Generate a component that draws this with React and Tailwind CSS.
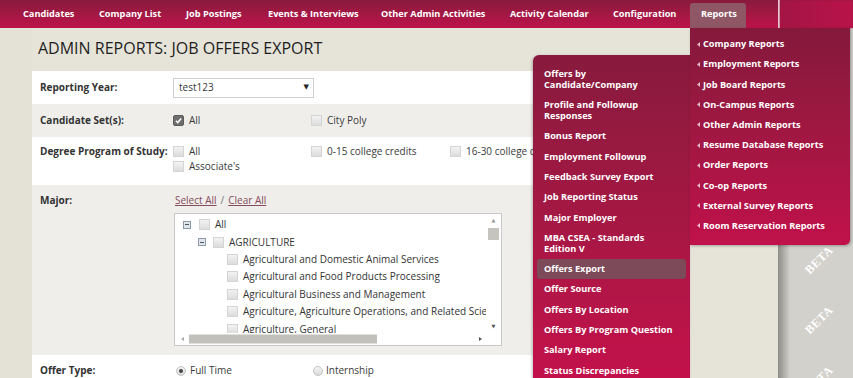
import React from 'react';

const navItems = [
    ['Candidates', 'w-[76px]'],
    ['Company List', 'w-[87px]'],
    ['Job Postings', 'w-[82px]'],
    ['Events & Interviews', 'w-[113px]'],
    ['Other Admin Activities', 'w-[129px]'],
    ['Activity Calendar', 'w-[103px]'],
    ['Configuration', 'w-[88px]'],
];

const subItems = [
    ['Offers by', 'Candidate/Company'],
    ['Profile and Followup', 'Responses'],
    ['Bonus Report'],
    ['Employment Followup'],
    ['Feedback Survey Export'],
    ['Job Reporting Status'],
    ['Major Employer'],
    ['MBA CSEA - Standards', 'Edition V'],
    ['Offers Export'],
    ['Offer Source'],
    ['Offers By Location'],
    ['Offers By Program Question'],
    ['Salary Report'],
    ['Status Discrepancies'],
];

const reportGroups = [
    'Company Reports',
    'Employment Reports',
    'Job Board Reports',
    'On-Campus Reports',
    'Other Admin Reports',
    'Resume Database Reports',
    'Order Reports',
    'Co-op Reports',
    'External Survey Reports',
    'Room Reservation Reports',
];

const majors = [
    'Agricultural and Domestic Animal Services',
    'Agricultural and Food Products Processing',
    'Agricultural Business and Management',
    'Agriculture, Agriculture Operations, and Related Sciences',
    'Agriculture, General',
];

function Box({ checked, className = '' }) {
    if (checked) {
        return (
            <span className={`w-[11px] h-[11px] shrink-0 rounded-[2px] bg-[#6e6e6e] border border-[#5c5c5c] flex items-center justify-center ${className}`}>
                <svg width="7" height="7" viewBox="0 0 8 8">
                    <path d="M1 4.3 L3.1 6.3 L7 1.6" stroke="white" strokeWidth="1.8" fill="none" />
                </svg>
            </span>
        );
    }
    return <span className={`block w-[11px] h-[11px] shrink-0 border border-[#d4d4d4] bg-linear-to-b from-[#f3f3f3] to-[#dcdcdc] ${className}`} />;
}

function Radio({ checked }) {
    return (
        <span className="w-[10px] h-[10px] shrink-0 rounded-full border border-[#c4c4c4] bg-linear-to-b from-[#f4f4f4] to-[#dadada] flex items-center justify-center">
            {checked && <span className="w-[4px] h-[4px] rounded-full bg-[#444]" />}
        </span>
    );
}

function Toggle() {
    return (
        <span className="w-[8px] h-[8px] shrink-0 border border-[#8f9aa8] bg-[#dfe5ec] flex items-center justify-center">
            <span className="w-[4px] h-[1px] bg-[#4b5664]" />
        </span>
    );
}

function Row({ label, className, children }) {
    return (
        <div className={`flex shrink-0 ${className}`}>
            <div className="w-[141px] shrink-0 pl-[8px] font-bold text-[#333]">{label}</div>
            <div className="flex-1">{children}</div>
        </div>
    );
}

export default function App() {
    return (
        <div className="relative w-[853px] h-[378px] overflow-hidden bg-[#e6e3d9] font-['Open_Sans','DejaVu_Sans',sans-serif] text-[10px] text-[#3a3a3a]">
            {/* top nav */}
            <div className="flex h-[28px] bg-linear-to-b from-[#891a3d] to-[#bd124a] pl-[11px] text-white font-bold text-[9.2px]">
                {navItems.map(([label, w]) => (
                    <div key={label} className={`${w} pl-[12px] flex items-center pb-[1px]`}>
                        {label}
                    </div>
                ))}
                <div className="ml-[1px] mt-[3px] w-[56px] pl-[11px] flex items-center pb-[3px] rounded-t-[3px] bg-[#8f5766]">
                    Reports
                </div>
                <div className="ml-[32px] w-[2px] bg-[#e9d6dd]" />
                <div className="flex-1 bg-linear-to-r from-[#a31545] to-[#b9134a] blur-[1px]" />
            </div>

            <div className="flex h-[350px]">
                <div className="w-[778px] flex">
                    <div className="w-[32px] bg-[#e4e1d6]" />
                    <div className="flex-1 flex flex-col">
                        <div className="h-[43px] shrink-0 pl-[6px] pb-[4px] flex items-center text-[16px] text-[#1e1e1e]">
                            ADMIN REPORTS: JOB OFFERS EXPORT
                        </div>

                        <div className="w-[640px] shrink-0 flex flex-col">
                            <Row label="Reporting Year:" className="h-[33px] items-center bg-white">
                                <div className="w-[141px] h-[20px] border border-[#cfcfcf] bg-white flex items-center justify-between pl-[5px] pr-[4px]">
                                    <span>test123</span>
                                    <span className="text-[7px] text-[#222]">▼</span>
                                </div>
                            </Row>

                            <Row label="Candidate Set(s):" className="h-[33px] items-center bg-[#efeeeb]">
                                <div className="flex">
                                    <label className="w-[138px] flex items-center gap-[5px]">
                                        <Box checked /> All
                                    </label>
                                    <label className="flex items-center gap-[5px]">
                                        <Box /> City Poly
                                    </label>
                                </div>
                            </Row>

                            <Row label="Degree Program of Study:" className="h-[48px] pt-[7px] bg-white leading-[15px]">
                                <div className="grid grid-cols-[138px_139px_1fr]">
                                    <label className="flex items-center gap-[5px]"><Box /> All</label>
                                    <label className="flex items-center gap-[5px]"><Box /> 0-15 college credits</label>
                                    <label className="flex items-center gap-[5px] whitespace-nowrap"><Box /> 16-30 college credits</label>
                                    <label className="flex items-center gap-[5px]"><Box /> Associate's</label>
                                </div>
                            </Row>

                            <Row label="Major:" className="h-[170px] pt-[8px] bg-[#efeeeb] leading-[15px]">
                                <div className="pl-[2px] text-[#844b5a]">
                                    <span className="underline">Select All</span>
                                    <span className="text-[#777] mx-[4px]">/</span>
                                    <span className="underline">Clear All</span>
                                </div>
                                {/* tree list box with its scrollbars */}
                                <div className="relative z-[1] mt-[5px] ml-[1px] w-[328px] grid grid-cols-[1fr_15px] grid-rows-[119px_12px] border border-[#c9c9c9] bg-white text-[#333] text-[10px]">
                                    <div className="min-w-0 overflow-hidden pt-[2px] pl-[8px]">
                                        <div className="h-[17.4px] flex items-center whitespace-nowrap">
                                            <Toggle />
                                            <Box className="ml-[8px]" />
                                            <span className="ml-[5px]">All</span>
                                        </div>
                                        <div className="h-[17.4px] flex items-center whitespace-nowrap pl-[15px]">
                                            <Toggle />
                                            <Box className="ml-[7px]" />
                                            <span className="ml-[5px]">AGRICULTURE</span>
                                        </div>
                                        {majors.map((m) => (
                                            <div key={m} className="h-[17.4px] flex items-center whitespace-nowrap pl-[44px] gap-[5px]">
                                                <Box />
                                                <span>{m}</span>
                                            </div>
                                        ))}
                                    </div>
                                    <div className="flex flex-col items-center pt-[3px] text-[#999]">
                                        <span className="text-[5px] leading-[6px]">▲</span>
                                        <span className="block mt-[5px] w-[11px] h-[12px] bg-[#c6c4be]" />
                                        <span className="mt-auto mb-[4px] text-[5px] leading-[6px] text-[#555]">▼</span>
                                    </div>
                                    <svg width="311" height="12" viewBox="0 0 311 12" className="relative z-10 block">
                                        <path d="M9 4 L6 6 L9 8 Z" fill="#a8a8a8" />
                                        <rect x="14" y="1.5" width="188" height="9" fill="#c2c0ba" />
                                        <path d="M304 4 L307 6 L304 8 Z" fill="#555555" />
                                    </svg>
                                    <div className="bg-white" />
                                </div>
                            </Row>

                            <Row label="Offer Type:" className="h-[30px] pt-[8px] bg-white leading-[15px]">
                                <div className="flex">
                                    <label className="w-[138px] pl-[3px] flex items-center gap-[4px]">
                                        <Radio checked /> Full Time
                                    </label>
                                    <label className="pl-[2px] flex items-center gap-[3px]">
                                        <Radio /> Internship
                                    </label>
                                </div>
                            </Row>
                        </div>
                    </div>
                </div>

                {/* greyed area on the right */}
                <div className="flex-1 flex bg-[#d3d1cb]">
                    <div className="w-[12px] bg-linear-to-r from-[#8e8c87] to-[#d3d1cb]" />
                    <div className="flex-1 flex flex-col pt-[202px] pr-[17px]">
                        {[0, 1, 2].map((i) => (
                            <div key={i} className="h-[60px] shrink-0 flex items-center justify-end">
                                <span className="-rotate-45 text-white font-bold text-[12px] font-['Liberation_Serif',serif] tracking-[0.5px]">BETA</span>
                            </div>
                        ))}
                    </div>
                </div>
            </div>

            {/* Reports dropdown: sub menu */}
            <div className="absolute z-20 left-[533px] top-[55px] w-[157px] h-[330px] rounded-tl-[6px] bg-linear-to-b from-[#881a3d] to-[#c4104b] pt-[8px] text-white font-bold text-[9.2px] leading-[11px] shadow-[-1px_1px_3px_rgba(0,0,0,0.25)]">
                {subItems.map((lines) => (
                    <div
                        key={lines[0]}
                        className={`mx-[4px] pl-[7px] py-[4.67px] rounded-[3px] ${lines[0] === 'Offers Export' ? 'bg-[#7c4a58]' : ''}`}
                    >
                        {lines.map((l) => (
                            <div key={l}>{l}</div>
                        ))}
                    </div>
                ))}
            </div>

            {/* Reports dropdown: groups */}
            <div className="absolute z-20 left-[690px] top-[28px] w-[160px] h-[217px] rounded-br-[5px] bg-linear-to-b from-[#84193b] to-[#c0104a] pt-[6px] text-white font-bold text-[9.2px] shadow-[1px_1px_3px_rgba(0,0,0,0.3)]">
                {reportGroups.map((g) => (
                    <div key={g} className="h-[20.2px] pl-[7px] flex items-center gap-[3px]">
                        <svg width="3" height="5" viewBox="0 0 3 5">
                            <path d="M3 0 L0 2.5 L3 5 Z" fill="#e6b9c6" />
                        </svg>
                        <span>{g}</span>
                    </div>
                ))}
            </div>
        </div>
    );
}
